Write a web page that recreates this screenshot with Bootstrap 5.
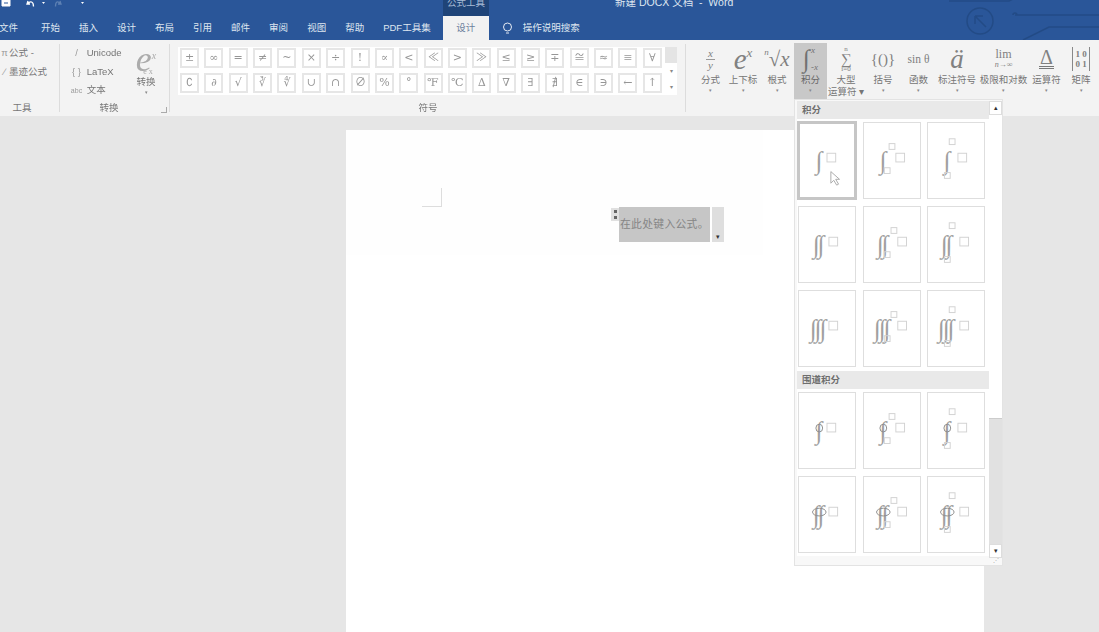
<!DOCTYPE html>
<html lang="zh-CN">
<head>
  <meta charset="UTF-8" />
  <title>新建 DOCX 文档 - Word</title>
  <link href="https://cdn.jsdelivr.net/npm/bootstrap@5.3.0/dist/css/bootstrap.min.css" rel="stylesheet">
  <style>
    html, body { height: 100%; overflow: hidden; }
    body {
      background: #e6e6e6;
      color: #757575;
      font-family: "Liberation Sans", "Noto Sans CJK SC", sans-serif;
      font-size: 9.5px;
    }
    .word-head, .ribbon, .eq-pop, .doc-page { opacity: .995; }
    .word-head { background: #2a5699; color: #dfe6f0; height: 40px; position: relative; overflow: hidden; }
    .head-art { position: absolute; right: 0; top: 0; }
    .title-row { height: 16px; line-height: 5px; }
    .qat-art { width: 110px; height: 16px; flex: none; }
    .tool-tag { width: 46px; height: 16px; margin-left: 333px; background: #1f4478; color: #a9bcd6; text-align: center; font-size: 9.5px; }
    .doc-title { margin-left: 126px; font-size: 10.5px; }
    .tab-row { height: 24px; line-height: 24px; gap: 19px; margin-left: -1px; }
    .tab-item { flex: none; }
    .tab-on { background: #f3f3f3; color: #6d7f9c; width: 46px; height: 25px; margin-left: -7px; text-align: center; }
    .tab-bulb { margin-left: -6px; margin-top: 5px; flex: none; }
    .tab-ask { margin-left: -9px; }
    .ribbon { background: #f3f3f3; height: 76px; }
    .rb-group { position: relative; height: 76px; flex: none; }
    .rb-sep::after { content: ""; position: absolute; right: 0; top: 4px; bottom: 4px; border-right: 1px solid #dcdcdc; }
    .rb-label { position: absolute; bottom: 2px; left: 0; right: 0; text-align: center; line-height: 12px; color: #777; }
    .lbl-tools { right: 16px; }
    .lbl-conv { right: 12px; }
    .rb-line { height: 18.5px; line-height: 18.5px; white-space: nowrap; }
    .rb-ico { display: inline-block; width: 9px; text-align: center; color: #9a9a9a; }
    .launcher { position: absolute; right: 3px; bottom: 3px; width: 6px; height: 6px; border: 1px solid #aaa; border-width: 0 1px 1px 0; }
    .tools-w { width: 60px; }
    .conv-w { width: 110px; }
    .conv-list { width: 71px; padding-left: 9px; }
    .conv-list .rb-ico { width: 15px; }
    .abc-ico { font-size: 7px; }
    .conv-big { width: 30px; text-align: center; line-height: 12px; }
    .conv-e { font: italic 36px/24px "Liberation Serif", serif; color: #ababab; height: 24px; }
    .conv-x { font-size: 10px; vertical-align: 12px; }
    .conv-sub { font: 8px/8px "Liberation Serif", serif; color: #aaa; height: 8px; margin-left: 4px; }
    .caret-dot { font-size: 5px; line-height: 9px; color: #888; text-align: center; }
    .sym-w { width: 516px; }
    .sym-wrap { width: 487px; height: 48px; background: #fff; margin: 7px 0 0 8px; padding-top: 1px; padding-left: 2px; }
    .sym-grid { display: grid; grid-template-columns: repeat(20, 19px); column-gap: 5.37px; row-gap: 5px; }
    .sym-cell { height: 20px; border: 2px solid #e6e6e6; text-align: center; color: #969696; font: 11px/16px "DejaVu Serif", "Liberation Serif", serif; overflow: hidden; }
    .sym-plain { font-family: "DejaVu Sans", sans-serif; }
    .sym-scroll { width: 12px; height: 48px; margin-top: 7px; background: #fff; color: #888; }
    .sym-up { height: 16px; background: #e4e4e4; }
    .sym-btn { height: 16px; font-size: 6px; line-height: 16px; text-align: center; }
    .struct-row { margin-left: 9px; }
    .st-item { flex: none; height: 56px; padding-top: 2px; text-align: center; line-height: 12px; white-space: nowrap; margin-top: 3px; }
    .st-on { background: #c8c8c8; color: #666; }
    .st-ico { height: 28px; font-family: "Liberation Serif", serif; color: #808080; margin-bottom: 1px; display: flex; align-items: center; justify-content: center; }
    .ic-e { font-size: 29px; font-style: italic; line-height: 28px; }
    .ic-sup { font-size: 13px; font-style: italic; align-self: flex-start; line-height: 16px; }
    .ic-n { font-size: 9px; font-style: italic; align-self: flex-start; line-height: 14px; }
    .ic-root { font-size: 21px; font-style: italic; line-height: 28px; }
    .ic-int { font-size: 25px; line-height: 26px; height: 26px; font-style: italic; color: #707070; }
    .ic-lim { font-size: 9px; font-style: italic; line-height: 9px; text-align: left; height: 26px; margin-left: 1px; color: #707070; display: flex; flex-direction: column; justify-content: space-between; }
    .frac { font: italic 11px/11px "Liberation Serif", serif; }
    .frac-bar { display: block; border-top: 1px solid #999; width: 9px; margin: 0 auto; }
    .ic-sum { font-size: 7px; line-height: 7px; display: flex; flex-direction: column; align-items: center; }
    .ic-sum b { font-size: 15px; line-height: 13px; font-weight: 400; }
    .ic-brace { font-size: 15px; }
    .ic-sin { font-size: 11.5px; }
    .ic-uml { font-size: 27px; font-style: italic; line-height: 28px; }
    .ic-limit { font-size: 12px; line-height: 11px; }
    .ic-limit i { display: block; font-size: 8px; line-height: 9px; }
    .ic-delta { border-bottom: 3px double #777; line-height: 17px; font-size: 20px; padding: 0 1px; }
    .ic-mat { border: 1px solid #888; border-width: 0 1px; padding: 0 2px; line-height: 10px; font-size: 9px; font-weight: 700; height: 24px; padding-top: 2px; }
    .doc-area { height: 520px; padding-top: 14px; padding-left: 346px; }
    .doc-page { background: #fff; width: 638px; height: 520px; padding-top: 58px; padding-left: 76px; }
    .crop-mark { width: 20px; height: 19px; border-right: 1px solid #ddd; border-bottom: 1px solid #ddd; }
    .eq-line { margin-left: 189px; height: 35px; }
    .eq-grip { width: 8px; height: 13px; background: #e0e0e0; margin-top: 1px; flex: none; padding: 2px 0 0 2.5px; }
    .eq-grip::before { content: ""; display: block; height: 9px; border-left: 3px dotted #666; }
    .eq-body { width: 91px; flex: none; background: #c6c6c6; line-height: 35px; font-size: 10.8px; letter-spacing: .3px; color: #858585; white-space: nowrap; text-indent: 1px; }
    .eq-tail { width: 12px; flex: none; margin-left: 2px; background: #dedede; font-size: 7px; color: #333; text-align: center; padding-top: 24px; line-height: 11px; }
    .eq-pop { position: absolute; left: 794px; top: 99px; width: 209px; height: 467px; background: #f8f8f8; border: 1px solid #e3e3e3; overflow: hidden; }
    .pop-scroll { width: 192px; height: 455px; margin: 1px 0 0 2px; overflow: hidden; background: #fff; }
    .pop-head { height: 18px; line-height: 18px; background: #e9e9e9; font-weight: 700; color: #6e6e6e; padding-left: 5px; }
    .tile-grid { display: grid; grid-template-columns: repeat(3, 58px); column-gap: 6.5px; row-gap: 7px; padding: 3px 0 4px 1px; }
    .tile-box { display: block; width: 58px; height: 77px; border: 1px solid #dedede; background: #fff; }
    .tile-on { outline: 3px solid #c6c6c6; outline-offset: -2px; }
    .pop-bar { position: absolute; left: 194px; top: 1px; width: 13px; height: 456px; background: #e1e1e1; }
    .bar-btn { height: 14px; background: #fff; border: 1px solid #ddd; font-size: 7px; line-height: 12px; text-align: center; color: #333; }
    .bar-thumb { height: 304px; background: #fff; border-bottom: 1px solid #ccc; }
    .bar-down { position: absolute; left: 194px; top: 444px; width: 13px; z-index: 2; }
    .pop-grip { position: absolute; right: 3px; bottom: 2px; color: #aaa; font-size: 6px; line-height: 5px; }
  </style>
</head>
<body>
  <header class="word-head">
    <svg class="head-art" width="160" height="40" fill="none" stroke="#234b86" stroke-width="1.5">
      <circle cx="41" cy="21" r="13"/>
      <path d="M36 16l11 11M36 16v8M36 16h8"/>
      <path d="M10 1h60l6-3M76 15h84M84 40l26-13h50M78 15a2 2 0 1 0-4 0"/>
    </svg>
    <div class="title-row d-flex">
      <svg class="qat-art" viewBox="0 0 110 16" fill="none" stroke="#fff">
        <path d="M2 0h8v6H2z" fill="#fff"/><path d="M4 3h4" stroke="#2a5699"/>
        <path d="M28 1l-1 3h3M27.500 3.500c3-3 6-2 6 3" stroke-width="1.300"/>
        <path d="M42 2h3l-1.500 2z" fill="#fff" stroke="none"/>
        <path d="M60 1l1 3h-3M60.500 3.500c-3-3-5-2-5 3" stroke="#5d80b3" stroke-width="1.300"/>
        <path d="M81 2h3l-1.500 2z" fill="#fff" stroke="none"/>
      </svg>
      <div class="tool-tag">公式工具</div>
      <div class="doc-title">新建 DOCX 文档 &nbsp;-&nbsp; Word</div>
    </div>
    <nav class="tab-row d-flex" id="tabRow"></nav>
  </header>

  <section class="ribbon d-flex">
    <div class="rb-group rb-sep tools-w pt-1">
      <div class="rb-line"><span class="rb-ico">π</span>公式 -</div>
      <div class="rb-line"><span class="rb-ico">∕</span>墨迹公式</div>
      <div class="rb-label lbl-tools">工具</div>
    </div>
    <div class="rb-group rb-sep conv-w pt-1 d-flex">
      <div class="conv-list">
        <div class="rb-line"><span class="rb-ico">/</span> Unicode</div>
        <div class="rb-line"><span class="rb-ico">{ }</span> LaTeX</div>
        <div class="rb-line"><span class="rb-ico abc-ico">abc</span> 文本</div>
      </div>
      <div class="conv-big">
        <div class="conv-e">e<span class="conv-x">x</span></div>
        <div class="conv-sub">e x</div>
        <div>转换</div>
        <div class="caret-dot">▾</div>
      </div>
      <div class="rb-label lbl-conv">转换</div>
      <span class="launcher"></span>
    </div>
    <div class="rb-group sym-w rb-sep">
      <div class="d-flex">
        <div class="sym-wrap"><div class="sym-grid" id="symGrid"></div></div>
        <div class="sym-scroll">
          <div class="sym-up"></div>
          <div class="sym-btn">▾</div>
          <div class="sym-btn">▾</div>
        </div>
      </div>
      <div class="rb-label">符号</div>
    </div>
    <div class="d-flex struct-row" id="structRow"></div>
  </section>

  <main class="doc-area">
    <div class="doc-page">
      <div class="crop-mark"></div>
      <div class="eq-line d-flex">
        <div class="eq-grip"></div>
        <div class="eq-body">在此处键入公式。</div>
        <div class="eq-tail">▾</div>
      </div>
    </div>
  </main>

  <div class="eq-pop">
    <div class="pop-scroll">
      <div class="pop-head">积分</div>
      <div class="tile-grid" id="tilesA"></div>
      <div class="pop-head">围道积分</div>
      <div class="tile-grid" id="tilesB"></div>
    </div>
    <div class="pop-bar">
      <div class="bar-btn">▴</div>
      <div class="bar-thumb"></div>
    </div>
    <div class="bar-btn bar-down">▾</div>
    <div class="pop-grip">⋰</div>
  </div>

  <script>
    const tabs = ["文件", "开始", "插入", "设计", "布局", "引用", "邮件", "审阅", "视图", "帮助", "PDF工具集"];
    document.getElementById("tabRow").innerHTML =
      tabs.map((t, i) => `<span class="tab-item ${i === 0 ? 'me-1' : ''}">${t}</span>`).join("") +
      `<span class="tab-item tab-on">设计</span>
       <svg class="tab-bulb" width="11" height="15" fill="none" stroke="#e4eaf3"><circle cx="5.500" cy="6" r="4"/><path d="M4 12h3"/></svg>
       <span class="tab-item tab-ask">操作说明搜索</span>`;

    const syms = "± ∞ = ≠ ~ × ÷ ! ∝ < ≪ > ≫ ≤ ≥ ∓ ≅ ≈ ≡ ∀ ∁ ∂ √ ∛ ∜ ∪ ∩ ∅ % ° ℉ ℃ ∆ ∇ ∃ ∄ ∈ ∋ ← ↑".split(" ");
    document.getElementById("symGrid").innerHTML = syms.map(s =>
      `<div class="sym-cell ${s === '∛' || s === '∜' ? 'sym-plain' : ''}">${s.replace("<", "&lt;")}</div>`).join("");

    const items = [
      [31, `<span class="frac">x<span class="frac-bar"></span>y</span>`, "分式"],
      [34, `<span class="ic-e">e</span><span class="ic-sup">x</span>`, "上下标"],
      [34, `<span class="ic-n">n</span><span class="ic-root">√x</span>`, "根式"],
      [33, `<span class="ic-int">∫</span><span class="ic-lim"><span>x</span><span>-x</span></span>`, "积分", "on"],
      [38, `<span class="ic-sum">n<b>∑</b>i=0</span>`, "大型<br>运算符 ▾"],
      [36, `<span class="ic-brace">{()}</span>`, "括号"],
      [35, `<span class="ic-sin">sin θ</span>`, "函数"],
      [42, `<span class="ic-uml">ä</span>`, "标注符号"],
      [51, `<span class="ic-limit">lim<i>n→∞</i></span>`, "极限和对数"],
      [35, `<span class="ic-delta">Δ</span>`, "运算符"],
      [34, `<span class="ic-mat">1 0<br>0 1</span>`, "矩阵"]
    ];
    document.getElementById("structRow").innerHTML = items.map(t => `
      <div class="st-item ${t[3] ? 'st-on' : ''}" style="width:${t[0]}px">
        <div class="st-ico">${t[1]}</div>
        <div>${t[2]}</div>
        ${t[2].includes('<br>') ? '' : '<div class="caret-dot">▾</div>'}
      </div>`).join("");

    // one tile: count of integral signs, limits position, ring for the contour group
    function tile(count, mode, ring, on) {
      const shifts = { 1: [0], 2: [-3, 2], 3: [-6, -1, 4] }[count];
      const base = mode === 0 ? 21 : 20;
      const signs = shifts.map(s => `<text x="${base + s}" y="47" font-size="26" font-style="italic" text-anchor="middle" font-family="Liberation Serif" fill="#a0a0a0">∫</text>`).join("");
      const o = count > 1 ? 2 : 0;
      const boxes = [[mode === 1 ? 33 + o : mode === 2 ? 31 + o : 29 + o, 31, 9]];
      if (mode === 1) boxes.push([26 + o, 21, 6], [21, 46, 6]);
      if (mode === 2) boxes.push([22, 16, 6], [17, 51, 6]);
      const rects = boxes.map(b => `<rect x="${b[0]}" y="${b[1]}" width="${b[2]}" height="${b[2]}" fill="none" stroke="#d2d2d2"/>`).join("");
      const circle = ring ? `<ellipse cx="${base}" cy="36" rx="${count > 1 ? 7 : 3.500}" ry="4" fill="none" stroke="#8c8c8c"/>` : "";
      const pointer = on ? `<path d="M33 50v12l3-3 3 5 2-1-3-5h4z" fill="#fff" stroke="#aaa"/>` : "";
      return `<svg class="tile-box ${on ? 'tile-on' : ''}" viewBox="0 0 58 77">${signs}${circle}${rects}${pointer}</svg>`;
    }
    let a = "", b = "";
    [1, 2, 3].forEach(n => [0, 1, 2].forEach(m => { a += tile(n, m, false, n === 1 && m === 0); }));
    [1, 2].forEach(n => [0, 1, 2].forEach(m => { b += tile(n, m, true, false); }));
    document.getElementById("tilesA").innerHTML = a;
    document.getElementById("tilesB").innerHTML = b;
  </script>
  <script src="https://cdn.jsdelivr.net/npm/bootstrap@5.3.0/dist/js/bootstrap.bundle.min.js"></script>
</body>
</html>
